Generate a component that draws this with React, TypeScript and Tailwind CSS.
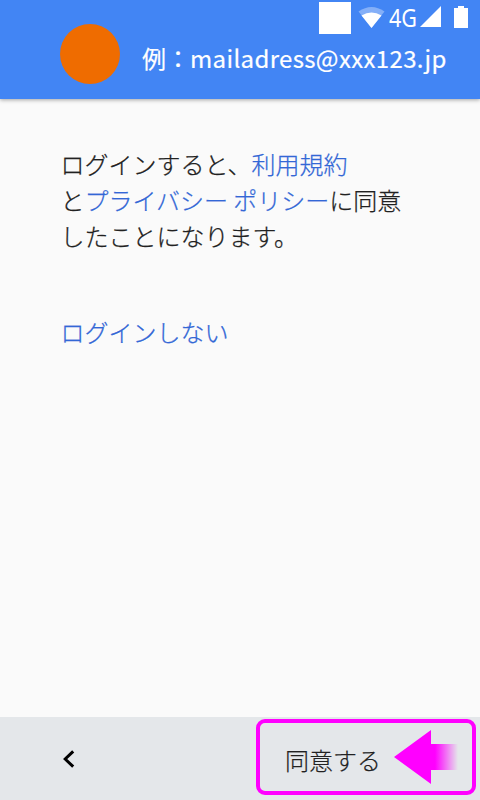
export default function App() {
  return (
    <div className="flex h-[800px] w-[480px] flex-col overflow-hidden bg-[#fafafa] font-['Noto_Sans_CJK_JP',sans-serif] text-[24px] text-[#212121]">
      <header className="relative flex h-[99px] shrink-0 bg-[#4285f4] pt-6 pl-[60px] text-white shadow-[0_1px_4px_rgba(0,0,0,0.35)]">
        <div className="size-[60px] rounded-full bg-[#ef6c00]" />
        <div className="mt-4 ml-[22px] h-9 text-[24px] leading-9 font-normal whitespace-nowrap [-webkit-text-stroke:0.2px_white]">例：<span className="tracking-[0.35px]">mailadress@xxx123.jp</span></div>
        <div className="absolute top-0 right-0 flex h-9 w-[162px]">
          <svg width="162" height="36" viewBox="318 0 162 36" fill="white">
            <rect x="319" y="2" width="32" height="32" />
            <path d="M358.500 11.500Q371.500 2.500 384.500 11.500L371.500 28Z" opacity=".35" />
            <path d="M361.500 15.500Q371.500 9.500 381.500 15.500L371.500 28Z" />
            <text x="389" y="27" fontSize="25" fontFamily="Noto Sans, sans-serif" textLength="28" lengthAdjust="spacingAndGlyphs">4G</text>
            <path d="M420 27L441 6V27Z" />
            <path d="M454 8H458V6H464V8H468V28H454Z" />
          </svg>
        </div>
      </header>
      <main className="flex-1 pt-[47px] pl-[60.500px] leading-9 font-light [-webkit-text-stroke:0.25px_currentColor]">
        <p>ログインすると、<span className="text-[#3367d6]">利用規約</span><br />と<span className="text-[#3367d6]">プライバシー ポリシー</span>に同意<br />したことになります。</p>
        <p className="mt-[60px] text-[#3367d6]">ログインしない</p>
      </main>
      <footer className="flex h-[83px] shrink-0 items-start bg-[#e4e7ea]">
        <svg className="mt-[31px] ml-[62px]" width="14" height="22" viewBox="0 0 14 22" fill="none" stroke="#000" strokeWidth="3"><path d="M11.200 3.300L3.200 11L11.200 18.700" /></svg>
        <div className="mt-[2px] ml-[180px] flex h-[76px] w-[220px] rounded-[9px] border-4 border-[#ff00ff] pt-[19px] pl-[25px]">
          <span className="h-9 w-24 leading-9 font-light [-webkit-text-stroke:0.2px_currentColor]">同意する</span>
          <svg className="-mt-3 ml-[13px]" width="64" height="54" viewBox="0 0 64 54">
            <defs><linearGradient id="tail" gradientUnits="userSpaceOnUse" x1="0" y1="0" x2="64" y2="0"><stop offset=".64" stopColor="#f0f" /><stop offset="1" stopColor="#f0f" stopOpacity="0" /></linearGradient></defs>
            <path d="M0 27L37 0V14H64V40H37V54Z" fill="url(#tail)" />
          </svg>
        </div>
      </footer>
    </div>
  );
}
